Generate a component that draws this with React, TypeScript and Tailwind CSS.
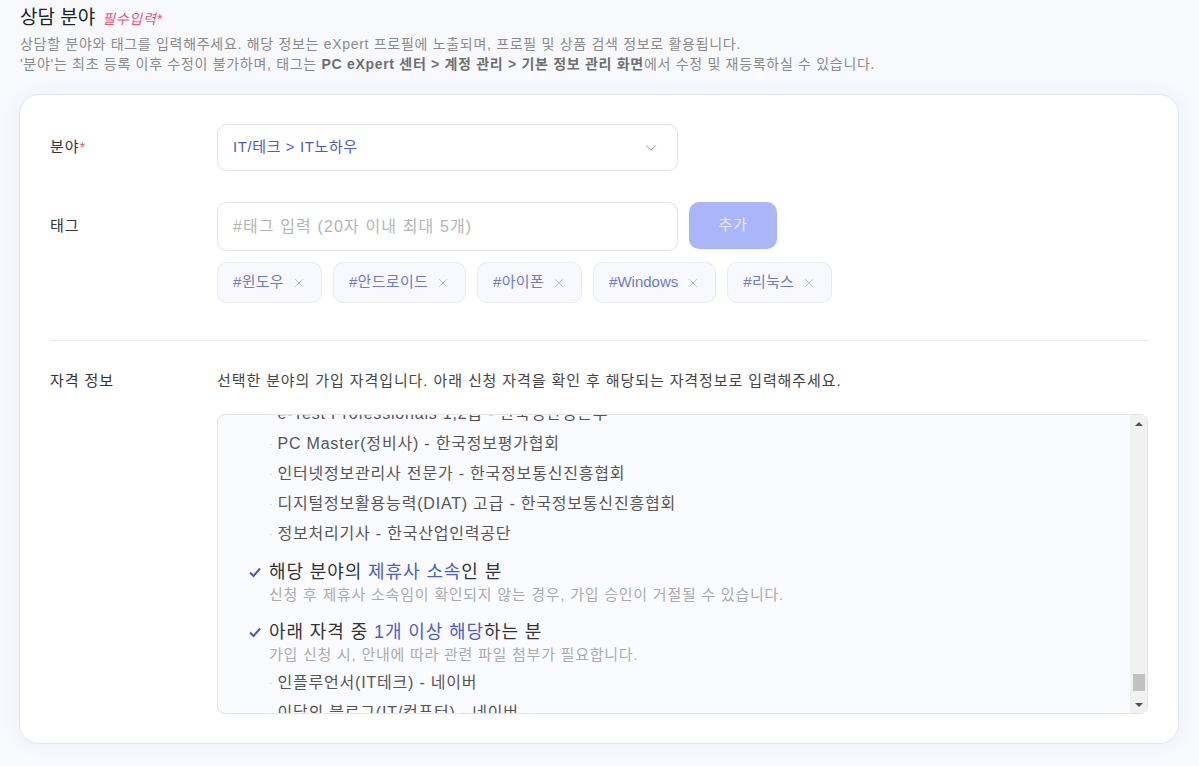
import { ChevronDown, X } from "lucide-react";

const font = { fontFamily: '"Liberation Sans", "Noto Sans CJK KR", sans-serif' };

const tags = [
  { label: "#윈도우", ko: true },
  { label: "#안드로이드", ko: true },
  { label: "#아이폰", ko: true },
  { label: "#Windows", ko: false },
  { label: "#리눅스", ko: true },
];

function Bullet({ children }: { children: React.ReactNode }) {
  return (
    <li className="flex h-[30px] items-center pl-[51px] text-[16px] tracking-[0.05em] text-[#555]">
      <span className="mr-[4px] text-[11px] text-[#c4c4c4]">·</span>
      {children}
    </li>
  );
}

function CheckHead({ children }: { children: React.ReactNode }) {
  return (
    <div className="flex h-[26px] items-center pl-[30px] text-[18px] tracking-[0.05em] text-[#333]">
      <svg width="14" height="14" viewBox="0 0 14 14" className="mr-[7px]">
        <polyline points="2,7.5 5.5,11 12,3.5" fill="none" stroke="#4a58b8" strokeWidth="2" />
      </svg>
      {children}
    </div>
  );
}

function Scrollbar() {
  return (
    <div className="flex w-[17px] flex-col items-center bg-[#f1f1f1]">
      <div className="flex h-[17px] w-full items-center justify-center">
        <div className="h-0 w-0 border-x-[4px] border-b-[4px] border-x-transparent border-b-[#505050]" />
      </div>
      <div className="flex flex-1 flex-col justify-end px-[2px] pb-[5px]">
        <div className="h-[17px] w-[12px] bg-[#c1c1c1]" />
      </div>
      <div className="flex h-[17px] w-full items-center justify-center">
        <div className="h-0 w-0 border-x-[4px] border-t-[4px] border-x-transparent border-t-[#505050]" />
      </div>
    </div>
  );
}

export default function App() {
  return (
    <div className="min-h-[766px] bg-[#f8f9fd] pt-[6px]" style={font}>
      <div className="pl-5">
        <div className="flex items-baseline gap-[7px]">
          <h2 className="text-[19px] font-normal leading-[24px] text-[#222]">상담 분야</h2>
          <span className="text-[14px] italic tracking-[0.05em] text-[#e2587c]">필수입력*</span>
        </div>
        <p className="mt-[4px] text-[14px] leading-[20px] tracking-[0.05em] text-[#8a8a8a]">
          상담할 분야와 태그를 입력해주세요. 해당 정보는 eXpert 프로필에 노출되며, 프로필 및 상품 검색 정보로 활용됩니다.
          <br />
          '분야'는 최초 등록 이후 수정이 불가하며, 태그는{" "}
          <b className="font-bold text-[#6f6f6f]">PC eXpert 센터 &gt; 계정 관리 &gt; 기본 정보 관리 화면</b>에서 수정 및 재등록하실 수 있습니다.
        </p>
      </div>

      <div className="ml-[19px] mr-[20px] mt-[20px] rounded-[20px] border border-[#e3e5f0] bg-white px-[30px] pb-[29px] pt-[29px] shadow-[0_0_18px_rgba(110,120,220,0.07)]">
        <div className="flex items-center">
          <div className="w-[167px] text-[15px] tracking-[0.06em] text-[#333]">
            분야<span className="text-[#e2587c]">*</span>
          </div>
          <div className="flex h-[47px] w-[461px] items-center justify-between rounded-[10px] border border-[#e2e2e2] pl-[15px] pr-[17px] text-[15px] tracking-[0.04em] text-[#4f5bb6]">
            <span>IT/테크 &gt; IT노하우</span>
            <ChevronDown size={18} strokeWidth={1.2} className="text-[#8a8a8a]" />
          </div>
        </div>

        <div className="mt-[31px] flex">
          <div className="flex h-[49px] w-[167px] items-center text-[15px] tracking-[0.06em] text-[#333]">태그</div>
          <div className="flex flex-col">
            <div className="flex gap-[11px]">
              <div className="flex h-[49px] w-[461px] items-center rounded-[10px] border border-[#e2e2e2] pl-[15px] text-[16px] tracking-[0.07em] text-[#b4b4b4]">
                #태그 입력 (20자 이내 최대 5개)
              </div>
              <button className="h-[47px] w-[88px] rounded-[10px] bg-[#aab6fa] text-[15px] tracking-[0.05em] text-[#e9ecff]">추가</button>
            </div>
            <div className="mt-[11px] flex gap-[11px]">
              {tags.map((t) => (
                <div
                  key={t.label}
                  className={`flex h-[41px] items-center gap-[8px] rounded-[10px] border border-[#e8ebf4] bg-[#f8f9fe] px-[15px] text-[15px] text-[#6e7bcf] ${t.ko ? "tracking-[0.02em]" : "tracking-normal"}`}
                >
                  {t.label}
                  <X size={14} strokeWidth={1.3} className="text-[#b0b0b8]" />
                </div>
              ))}
            </div>
          </div>
        </div>

        <div className="mt-[37px] border-t border-[#e8e8ec]" />

        <div className="mt-[29px] flex">
          <div className="w-[167px] text-[15px] leading-[22px] tracking-[0.06em] text-[#333]">자격 정보</div>
          <div className="flex-1">
            <p className="text-[15px] leading-[22px] tracking-[0.06em] text-[#444]">
              선택한 분야의 가입 자격입니다. 아래 신청 자격을 확인 후 해당되는 자격정보로 입력해주세요.
            </p>
            <div className="mt-[22px] flex h-[300px] overflow-hidden rounded-[8px] border border-[#e4e4e6] bg-[#fafbfe]">
              <div className="flex-1 overflow-hidden">
                <div className="-mt-[16px]">
                  <ul>
                    <Bullet>e-Test Professionals 1,2급 - 한국생산성본부</Bullet>
                    <Bullet>PC Master(정비사) - 한국정보평가협회</Bullet>
                    <Bullet>인터넷정보관리사 전문가 - 한국정보통신진흥협회</Bullet>
                    <Bullet>디지털정보활용능력(DIAT) 고급 - 한국정보통신진흥협회</Bullet>
                    <Bullet>정보처리기사 - 한국산업인력공단</Bullet>
                  </ul>
                  <div className="mt-[10px]">
                    <CheckHead>
                      해당 분야의&nbsp;<span className="text-[#4a5fc6]">제휴사 소속</span>인 분
                    </CheckHead>
                    <p className="pl-[51px] text-[15px] leading-[20px] tracking-[0.05em] text-[#ababab]">
                      신청 후 제휴사 소속임이 확인되지 않는 경우, 가입 승인이 거절될 수 있습니다.
                    </p>
                  </div>
                  <div className="mt-[14px]">
                    <CheckHead>
                      아래 자격 중&nbsp;<span className="text-[#4a5fc6]">1개 이상 해당</span>하는 분
                    </CheckHead>
                    <p className="pl-[51px] text-[15px] leading-[20px] tracking-[0.05em] text-[#ababab]">
                      가입 신청 시, 안내에 따라 관련 파일 첨부가 필요합니다.
                    </p>
                  </div>
                  <ul className="mt-[3px]">
                    <Bullet>인플루언서(IT테크) - 네이버</Bullet>
                    <Bullet>이달의 블로그(IT/컴퓨터) - 네이버</Bullet>
                  </ul>
                </div>
              </div>
              <Scrollbar />
            </div>
          </div>
        </div>
      </div>
    </div>
  );
}
